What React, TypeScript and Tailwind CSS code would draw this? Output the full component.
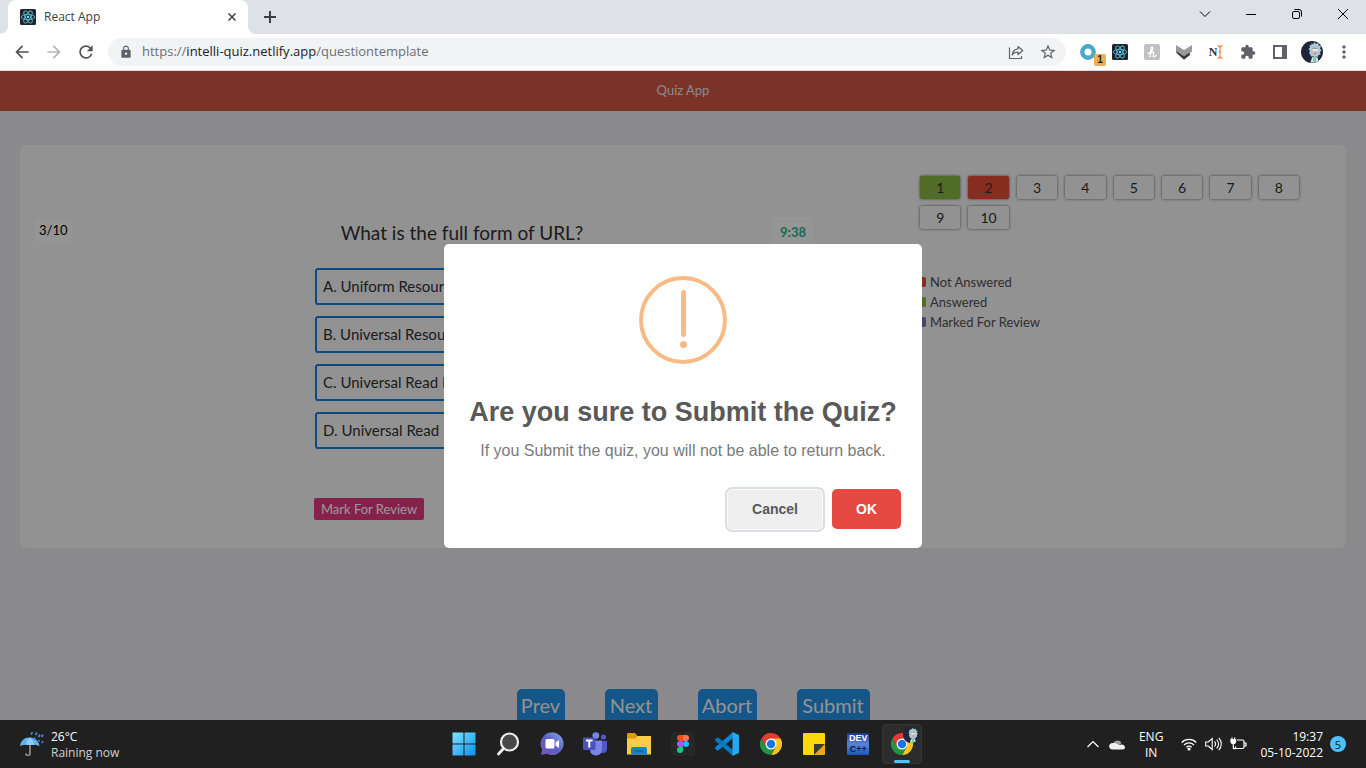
import { useState } from 'react';
import type { ReactNode } from 'react';
import {
  MdArrowBack,
  MdArrowForward,
  MdRefresh,
  MdLock,
  MdStarBorder,
  MdExtension,
  MdMoreVert,
} from 'react-icons/md';

function ReactLogo() {
  return (
    <svg viewBox="0 0 16 16" className="size-4 shrink-0">
      <rect width="16" height="16" rx="1.5" fill="#20232a" />
      <g fill="none" stroke="#57b8d3" strokeWidth="0.9">
        <ellipse cx="8" cy="8" rx="6.8" ry="2.6" />
        <ellipse cx="8" cy="8" rx="6.8" ry="2.6" transform="rotate(60 8 8)" />
        <ellipse cx="8" cy="8" rx="6.8" ry="2.6" transform="rotate(120 8 8)" />
      </g>
      <circle cx="8" cy="8" r="1.3" fill="#61dafb" />
    </svg>
  );
}

function Portrait({ size }: { size: string }) {
  return (
    <svg viewBox="0 0 22 22" className={size}>
      <circle cx="11" cy="11" r="11" fill="#20253a" />
      <path d="m10.500 2 1.500 1.500L13.500 1l1.500 2 2.500-1v2.500l2.500.5-1 2.500 1.500 2-1.500 1.500.5 2.500-2 .5-.5 2-3-1-4 .5-1-2.500L8 12l1-2-1.500-2L9 6.500 8.500 4l2 .200z" fill="#a5ccd9" />
      <ellipse cx="14" cy="9.800" rx="3" ry="5" fill="#cbbfb8" />
      <circle cx="12.800" cy="9" r="1.100" fill="#fff" />
      <circle cx="15.400" cy="9" r="1.100" fill="#fff" />
      <path d="M11.500 7.300h5M12.500 12.500h3" stroke="#6d7d88" strokeWidth="0.700" fill="none" />
      <path d="M9.500 21.500 11 16.500l2.500-1.500 3 1.500 1 3.500q-4 2-8 1.500" fill="#dfe9ec" />
      <path d="m12 16.500 2-1 1.500 1-.5 5h-3z" fill="#6fd0ac" />
    </svg>
  );
}

function ChromeLogo({ size }: { size: string }) {
  return (
    <svg viewBox="0 0 48 48" className={size}>
      <path d="M24 24 3.200 12A24 24 0 0 1 44.800 12z" fill="#e33b2e" />
      <path d="M24 12h20.800A24 24 0 0 1 24 48l10.400-18z" fill="#fcc31e" />
      <path d="M3.200 12 13.600 30 24 36 34.400 30 24 48A24 24 0 0 1 3.200 12z" fill="#229342" />
      <path d="M3.200 12 13.600 30 24 24 24 12z" fill="#e33b2e" />
      <circle cx="24" cy="24" r="12" fill="#fff" />
      <circle cx="24" cy="24" r="9.300" fill="#1a73e8" />
    </svg>
  );
}

function TabStrip() {
  return (
    <div className="flex h-[34px] items-stretch bg-[#dee1e6] pl-2">
      <div className="relative flex w-60 items-center rounded-t-lg bg-white pr-2 pl-3">
        <svg viewBox="0 0 8 8" className="absolute bottom-0 -left-2 size-2" fill="#fff">
          <path d="M8 0v8H0a8 8 0 0 0 8-8" />
        </svg>
        <svg viewBox="0 0 8 8" className="absolute -right-2 bottom-0 size-2" fill="#fff">
          <path d="M0 0v8h8a8 8 0 0 1-8-8" />
        </svg>
        <ReactLogo />
        <span className="flex-1 pl-2 text-[12px] text-[#3c4043]">React App</span>
        <button aria-label="Close tab" className="flex size-4 items-center justify-center">
          <svg viewBox="0 0 8 8" className="size-2" stroke="#3c4043" strokeWidth="1.500">
            <path d="m0.500 0.500 7 7m0-7-7 7" />
          </svg>
        </button>
      </div>
      <button aria-label="New tab" className="flex w-11 items-center justify-center">
        <svg viewBox="0 0 12 12" className="size-3" stroke="#3c4043" strokeWidth="2">
          <path d="M6 0v12M0 6h12" />
        </svg>
      </button>
      <div className="ml-auto flex h-7 text-black">
        <button aria-label="Search tabs" className="flex w-[46px] items-center justify-center">
          <svg viewBox="0 0 12 12" className="size-3" fill="none" stroke="currentColor">
            <path d="m1 3.500 5 5 5-5" />
          </svg>
        </button>
        <button aria-label="Minimize" className="flex w-[46px] items-center justify-center">
          <svg viewBox="0 0 10 10" className="size-[10px]" stroke="currentColor">
            <path d="M0 5.500h10" />
          </svg>
        </button>
        <button aria-label="Restore" className="flex w-[46px] items-center justify-center">
          <svg viewBox="0 0 10 10" className="size-[10px]" fill="none" stroke="currentColor">
            <rect x="0.500" y="2.500" width="7" height="7" rx="1.500" />
            <path d="M2.500.500H7A2.500 2.500 0 0 1 9.500 3v4.500" />
          </svg>
        </button>
        <button aria-label="Close window" className="flex w-[46px] items-center justify-center">
          <svg viewBox="0 0 10 10" className="size-[10px]" stroke="currentColor">
            <path d="m0 0 10 10M10 0 0 10" />
          </svg>
        </button>
      </div>
    </div>
  );
}

function ToolButton({ label, children }: { label: string; children: ReactNode }) {
  return (
    <button aria-label={label} className="flex size-8 shrink-0 items-center justify-center text-[#5f6368]">
      {children}
    </button>
  );
}

function Toolbar() {
  return (
    <div className="flex h-[37px] items-center border-b border-[#dadce0] bg-white pr-1.5 pl-1.5">
      <ToolButton label="Back"><MdArrowBack className="size-5 text-[#4f5357]" /></ToolButton>
      <ToolButton label="Forward"><MdArrowForward className="size-5 text-[#b4b6b8]" /></ToolButton>
      <ToolButton label="Reload"><MdRefresh className="size-5 text-[#4f5357]" /></ToolButton>
      <div className="ml-1.5 flex h-7 flex-1 items-center rounded-full bg-[#f1f3f4] pl-[11px]">
        <MdLock className="size-3.5 text-[#5f6368]" />
        <div role="textbox" aria-label="Address" className="flex-1 pl-[9px] text-[13px] text-[#6b6f74]">
          https://<span className="text-[#202124]">intelli-quiz.netlify.app</span>/questiontemplate
        </div>
        <ToolButton label="Share">
          <svg viewBox="0 0 16 16" className="size-4" fill="none" stroke="currentColor" strokeWidth="1.200">
            <path d="M1.500 3.500v11h12v-2.500" />
            <path d="M10 2.500 14.700 6.500 10 10.500V8.200C7 8.200 5.300 9 4.200 11 4.500 7.500 6.500 5.200 10 4.800z" strokeLinejoin="round" />
          </svg>
        </ToolButton>
        <ToolButton label="Bookmark this tab"><MdStarBorder className="size-[18px]" /></ToolButton>
        <span className="w-0.5" />
      </div>
      <div className="ml-1.5 flex items-center">
        <ToolButton label="Quick find, 1 notification">
          <span className="relative flex size-5 items-center justify-center">
            <svg viewBox="0 0 16 16" className="size-4">
              <circle cx="8" cy="8" r="5.700" fill="none" stroke="#46a9ca" strokeWidth="4.400" />
            </svg>
            <span className="absolute -right-2 -bottom-1 flex size-3 items-center justify-center rounded-xs bg-[#f0ad4e] font-['Liberation_Sans',sans-serif] text-[10px] leading-none font-bold text-[#222]">1</span>
          </span>
        </ToolButton>
        <ToolButton label="React tools"><ReactLogo /></ToolButton>
        <ToolButton label="Honey">
          <svg viewBox="0 0 16 16" className="size-4">
            <rect width="16" height="16" rx="2" fill="#c1c1c1" />
            <path d="M4 9.500C7 8 9 5.500 8.700 3.800 8.300 2.500 7 3 6.800 5L6 13M6.300 10.500C7 8.500 9.300 7.300 9.700 8.500S8.500 12 9.300 12.700 11.500 12 12 11.300" fill="none" stroke="#fff" strokeWidth="1.300" strokeLinecap="round" />
          </svg>
        </ToolButton>
        <ToolButton label="Layers">
          <svg viewBox="0 0 16 16" className="size-4">
            <path d="M0 1 8 6l8-5v6.500l-8 5-8-5z" fill="#9b9b9b" />
            <path d="M0 7 8 12.200 13.500 8.500 14 11l-6 4.800L.5 9z" fill="#3b3b3b" />
          </svg>
        </ToolButton>
        <ToolButton label="Name input">
          <span className="flex items-center font-['Liberation_Serif',serif] text-[12px] leading-none font-bold text-[#333]">
            N
            <svg viewBox="0 0 6 14" className="h-3.5 w-1.5" fill="none" stroke="#ee8547" strokeWidth="1.200">
              <path d="M.5.700Q3 .7 3 3v8q0 2.300-2.500 2.300M5.500.700Q3 .7 3 3m2.500 10.300Q3 13.300 3 11M1.500 7h3" />
            </svg>
          </span>
        </ToolButton>
        <ToolButton label="Extensions"><MdExtension className="size-4" /></ToolButton>
        <ToolButton label="Side panel">
          <svg viewBox="0 0 14 14" className="size-3.5">
            <path fillRule="evenodd" d="M0 0h14v14H0zM2 2v10h7V2z" fill="#5f6368" />
          </svg>
        </ToolButton>
        <ToolButton label="Profile"><Portrait size="size-[22px]" /></ToolButton>
        <ToolButton label="Menu"><MdMoreVert className="size-5" /></ToolButton>
      </div>
    </div>
  );
}

const OPTIONS = [
  'A. Uniform Resource Locator',
  'B. Universal Resource Locator',
  'C. Universal Read Locator',
  'D. Universal Read Link',
];

const LEGEND = [
  { label: 'Not Answered', swatch: 'bg-[#e24c35]' },
  { label: 'Answered', swatch: 'bg-[#85b440]' },
  { label: 'Marked For Review', swatch: 'bg-[#7a73a8]' },
];

const ACTIONS = [
  { label: 'Prev', width: 'w-12' },
  { label: 'Next', width: 'w-[53px]' },
  { label: 'Abort', width: 'w-[59px]' },
  { label: 'Submit', width: 'w-[73px]' },
];

function numberTone(n: number) {
  if (n === 1) return 'bg-[#85b440]';
  if (n === 2) return 'bg-[#e24c35]';
  return 'bg-[#f3f3f3]';
}

function QuizCard() {
  return (
    <section className="mx-5 mt-[34px] grid min-h-[403px] grid-cols-[294px_1fr_430px] rounded-md bg-[#f3f3f3] text-[#303030]">
      <div className="pt-[72px] pl-[15px]">
        <span className="inline-flex h-6 items-center rounded-sm bg-white/50 px-1 text-[13px] text-black">3/10</span>
      </div>
      <div className="flex items-start justify-between pt-[72px] pr-[102px]">
        <div className="w-[296px]">
          <h2 className="h-[51px] text-center text-[19px] leading-8 whitespace-nowrap">What is the full form of URL?</h2>
          <div className="flex flex-col gap-[11px] pl-px">
            {OPTIONS.map((option) => (
              <button key={option} className="h-[37px] rounded-[3px] border-2 border-[#177ad8] px-1.5 text-left text-[15px]">
                {option}
              </button>
            ))}
          </div>
          <button className="mt-[49px] h-[22px] w-[110px] rounded-xs bg-[#e0387b] text-[13px] leading-[22px] whitespace-nowrap text-white">
            Mark For Review
          </button>
        </div>
        <span className="flex h-8 w-[42px] items-center justify-center rounded-md bg-white/50 text-[13px] font-bold text-[#27b48a]">
          9:38
        </span>
      </div>
      <div className="pt-[31px] pl-1">
        <div className="grid w-[379px] grid-cols-8 gap-x-2 gap-y-[7px] text-[14px]">
          {Array.from({ length: 10 }, (_, i) => i + 1).map((n) => (
            <button key={n} className={`h-[23px] rounded-xs leading-[22px] shadow-[0_0_3px_0_rgba(0,0,0,0.6)] ${numberTone(n)}`}>
              {n}
            </button>
          ))}
        </div>
        <ul className="mt-[43px] text-[13px] leading-5 text-[#505050]">
          {LEGEND.map((item) => (
            <li key={item.label} className="flex items-center gap-1">
              <span className={`-ml-1 h-[10px] w-[10px] rounded-xs ${item.swatch}`} />
              {item.label}
            </li>
          ))}
        </ul>
      </div>
    </section>
  );
}

function ConfirmDialog({ onClose }: { onClose: () => void }) {
  return (
    <div className="absolute inset-0 flex items-center justify-center bg-black/40">
      <div
        role="dialog"
        aria-modal="true"
        aria-labelledby="confirm-title"
        className="flex w-[478px] flex-col items-center rounded-[5px] bg-white pt-8 font-['Liberation_Sans',Arial,sans-serif]"
      >
        <svg viewBox="0 0 88 88" className="size-[88px]">
          <circle cx="44" cy="44" r="42" fill="none" stroke="#f8bb86" strokeWidth="4" />
          <rect x="42" y="14" width="5" height="47" rx="2.500" fill="#f8bb86" />
          <circle cx="44.500" cy="68.500" r="3.500" fill="#f8bb86" />
        </svg>
        <h1 id="confirm-title" className="mt-8 text-[27px] leading-8 font-bold whitespace-nowrap text-[#595959]">
          Are you sure to Submit the Quiz?
        </h1>
        <p className="mt-3 text-[16px] leading-[22px] text-[#7a7a7a]">
          If you Submit the quiz, you will not be able to return back.
        </p>
        <div className="flex w-full items-center justify-end gap-[7px] pt-[25px] pr-[21px] pb-4 text-[14px] font-bold">
          <button
            onClick={onClose}
            className="h-[45px] w-[100px] rounded-[7px] border-2 border-[#d9dfe5] bg-[#efefef] text-[#595959] shadow-[inset_0_0_0_1px_#f8fafb]"
          >
            Cancel
          </button>
          <button onClick={onClose} className="h-10 w-[69px] rounded-[5px] bg-[#e64942] text-white">
            OK
          </button>
        </div>
      </div>
    </div>
  );
}

function TaskItem({ label, children }: { label: string; children: ReactNode }) {
  return (
    <button aria-label={label} className="relative flex h-12 w-11 items-center justify-center">
      {children}
    </button>
  );
}

function Taskbar() {
  return (
    <footer className="grid h-12 shrink-0 grid-cols-[1fr_482px_1fr] items-center bg-[#202020] text-[12px] leading-4 text-white">
      <button className="flex items-center gap-[7px] pl-5 text-left">
        <svg viewBox="0 0 24 24" className="size-6">
          <path d="M0 14C1 8 5 5 10 5.500S19 9 19.500 14q-5-2-9.500-1-5-1-10 1" fill="#60b2f2" />
          <path d="M10 5.500C7 8 6 10.500 6 13q2-.7 4 0l4 0c0-3-1.500-5.500-4-7.500" fill="#8ccbf8" />
          <path d="M10 13v8.500q0 2-2 2t-2-2" fill="none" stroke="#85878b" strokeWidth="1.800" />
          <path d="m12.500 0-1.500 2.500m6-2-1.500 2.500m-.5 2.500-1 2m6-5-1.500 2.500m4.500-2.500-1.500 2.500m-2 3-1 1.500m4.500-.5-1 2" stroke="#3f8ed8" strokeWidth="1.600" />
        </svg>
        <span className="pt-px">
          26°C
          <br />
          <span className="text-[#d0d0d0]">Raining now</span>
        </span>
      </button>
      <nav className="flex">
        <TaskItem label="Start">
          <svg viewBox="0 0 24 24" className="size-6">
            <defs>
              <linearGradient id="win" x1="0" y1="0" x2="1" y2="1" gradientUnits="objectBoundingBox">
                <stop stopColor="#7ae7ff" />
                <stop offset="1" stopColor="#0c8fee" />
              </linearGradient>
            </defs>
            <path d="M.5.500h11v11H.500zM12.500.500h11v11h-11zM.5 12.500h11v11H.500zM12.500 12.500h11v11h-11z" fill="url(#win)" />
          </svg>
        </TaskItem>
        <TaskItem label="Search">
          <svg viewBox="0 0 24 24" className="size-6" fill="none" stroke="#eee" strokeLinecap="round">
            <circle cx="13.500" cy="10" r="8.500" fill="#48494a" strokeWidth="2.200" />
            <path d="M7.500 16.500 2.500 22" strokeWidth="2.800" />
          </svg>
        </TaskItem>
        <TaskItem label="Chat">
          <svg viewBox="0 0 24 24" className="size-6">
            <defs>
              <linearGradient id="chat" x1="0" y1="1" x2="1" y2="0">
                <stop stopColor="#7a55b8" />
                <stop offset="0.500" stopColor="#5c5fc5" />
                <stop offset="1" stopColor="#8cacee" />
              </linearGradient>
            </defs>
            <path d="M12.500.500a11.300 11.300 0 1 1-5.500 21.300L1 23l1.200-5.500A11.300 11.300 0 0 1 12.500.500" fill="url(#chat)" />
            <rect x="5.500" y="7" width="9" height="9.500" rx="1.500" fill="#fff" />
            <path d="M15.500 10.500 19 8v8l-3.500-2.500z" fill="#fff" />
          </svg>
        </TaskItem>
        <TaskItem label="Teams">
          <svg viewBox="0 0 24 24" className="size-6">
            <circle cx="20.500" cy="5" r="2.600" fill="#5059c9" />
            <path d="M17 9h7v8q0 4-4 4-3 0-4-3z" fill="#5059c9" />
            <circle cx="12.800" cy="3.600" r="3.400" fill="#7b83eb" />
            <path d="M7 8.500h12V17q0 6-6 6.500-6-.5-6-6.500z" fill="#7b83eb" />
            <rect y="5.500" width="12.500" height="12.500" rx="1" fill="#4b53bc" />
            <path d="M3 8.500h6.500M6.250 8.500v7" stroke="#fff" strokeWidth="2" />
          </svg>
        </TaskItem>
        <TaskItem label="File Explorer">
          <svg viewBox="0 0 24 24" className="size-6">
            <path d="M0 2q0-1 1-1h7l2.500 3v5H0z" fill="#dc9a0a" />
            <path d="M0 6.500h8L10.500 4H24v18.500H0z" fill="#fdcb4a" />
            <path d="M4 22.500V17q0-2 2-2h12q2 0 2 2v5.500z" fill="#1482d0" />
            <path d="M8 19h8" stroke="#075c9c" strokeWidth="1.200" />
          </svg>
        </TaskItem>
        <TaskItem label="Figma">
          <svg viewBox="0 0 24 24" className="size-6">
            <rect width="24" height="24" rx="3" fill="#272727" />
            <path d="M12 3H9a3 3 0 0 0 0 6h3z" fill="#f24e1e" />
            <path d="M12 3h3a3 3 0 0 1 0 6h-3z" fill="#ff7262" />
            <path d="M12 9H9a3 3 0 0 0 0 6h3z" fill="#a259ff" />
            <circle cx="15" cy="12" r="3" fill="#1abcfe" />
            <path d="M12 15H9a3 3 0 1 0 3 3z" fill="#0acf83" />
          </svg>
        </TaskItem>
        <TaskItem label="Visual Studio Code">
          <svg viewBox="0 0 24 24" className="size-6">
            <path d="M18 0v6L3.500 18.200Q2.500 19 1.500 18L.5 17q-1-1 0-2z" fill="#0b84d2" />
            <path d="M18 24v-6L3.500 5.800Q2.500 5 1.500 6L.5 7q-1 1 0 2z" fill="#0876bd" />
            <path d="M17.500 0 24 3v18l-6.500 3z" fill="#2aa7ee" />
          </svg>
        </TaskItem>
        <TaskItem label="Chrome"><ChromeLogo size="size-[22px]" /></TaskItem>
        <TaskItem label="Sticky Notes">
          <svg viewBox="0 0 22 22" className="size-[22px]">
            <path d="M0 1q0-1 1-1h20q1 0 1 1v10L11 22H1q-1 0-1-1z" fill="#fdd70b" />
            <path d="M11 22V11h11z" fill="#3a3933" />
            <path d="M22 11v10q0 1-1 1H11z" fill="#e9a917" />
          </svg>
        </TaskItem>
        <TaskItem label="Dev C++">
          <span className="flex size-[22px] flex-col items-center overflow-hidden bg-linear-to-b from-[#17378f] via-[#5d83d8] to-[#1957b8] font-['Liberation_Sans',sans-serif] text-[9px] leading-[11px] font-bold">
            <span className="h-[11px]">DEV</span>
            <span className="h-[11px] text-[#06205c]">C++</span>
          </span>
        </TaskItem>
        <TaskItem label="Chrome, current window">
          <span className="relative flex size-10 items-center justify-center rounded-sm border border-[#363636] bg-[#2c2c2c]">
            <ChromeLogo size="size-[22px]" />
            <span className="absolute top-0.5 right-0.5"><Portrait size="size-4" /></span>
            <span className="absolute bottom-0 h-[3px] w-4 rounded-full bg-[#4cc2ff]" />
          </span>
        </TaskItem>
      </nav>
      <div className="flex items-center justify-end pr-5">
        <button aria-label="Show hidden icons" className="mr-2.5">
          <svg viewBox="0 0 12 12" className="size-3" fill="none" stroke="#fff" strokeWidth="1.200">
            <path d="m.5 9 5.500-5.500L11.500 9" />
          </svg>
        </button>
        <svg viewBox="0 0 16 12" className="h-3 w-4">
          <path d="M4 7a4.500 4.500 0 0 1 8.500-2L8 9z" fill="#a0a0a0" />
          <path d="M3.500 11.500a3.300 3.300 0 1 1 1.500-6.200q1-.5 2 .2l3 1.500q5-1.500 6 2 0 2.500-2.500 2.500z" fill="#f0f0f0" />
        </svg>
        <button className="mx-3.5 pt-px text-center">ENG<br />IN</button>
        <button aria-label="Network, sound and battery" className="mx-1 flex items-center gap-2">
          <svg viewBox="0 0 16 14" className="h-3.5 w-4" fill="none" stroke="#fff" strokeWidth="1.200">
            <path d="M.7 5.500a10.300 10.300 0 0 1 14.600 0M3 8a7 7 0 0 1 10 0M5.300 10.300a3.800 3.800 0 0 1 5.400 0" />
            <circle cx="8" cy="12" r="1" fill="#fff" />
          </svg>
          <svg viewBox="0 0 17 14" className="h-3.5 w-[17px]" fill="none" stroke="#fff" strokeWidth="1.100">
            <path d="M.7 5h2.500l4-3.500v11L3.200 9H.700zM9.500 4.500a3.500 3.500 0 0 1 0 5M11.700 2.700a6 6 0 0 1 0 8.600M13.800.800a9 9 0 0 1 0 12.400" />
          </svg>
          <svg viewBox="0 0 17 14" className="h-3.5 w-[17px]" fill="none" stroke="#fff" strokeWidth="1.200">
            <path d="M7 3h5.500q1.500 0 1.500 1.500v5.500q0 1.500-1.500 1.500H5.500V9.500M14.500 6H16v3h-1.500M3.300 7v4q0 .7.700.7h1.500" />
            <path d="M1 2.500h4.600v2.500L4.500 6.500H2L1 5zM2 .5v2m2.600-2v2" fill="#fff" />
          </svg>
        </button>
        <button className="ml-[9px] pt-px text-right">19:37<br />05-10-2022</button>
        <span className="ml-[7px] flex size-4 items-center justify-center rounded-full bg-[#4cc2ff] text-[11px] leading-none text-[#111]">5</span>
      </div>
    </footer>
  );
}

export default function App() {
  const [open, setOpen] = useState(true);
  return (
    <div className="flex h-screen flex-col overflow-hidden font-['Open_Sans','Noto_Sans',sans-serif]">
      <header className="shrink-0">
        <TabStrip />
        <Toolbar />
      </header>
      <main className="relative min-h-0 flex-1 overflow-hidden bg-[#e6e7eb] font-[Lato,sans-serif]">
        <div className="flex h-10 items-center justify-center bg-[#cb5540] text-[13px] text-[#e6e6e6]">Quiz App</div>
        <QuizCard />
        <div className="mt-[141px] flex justify-center gap-10 pl-5">
          {ACTIONS.map((action) => (
            <button
              key={action.label}
              onClick={() => setOpen(true)}
              className={`h-8 rounded-t-[5px] bg-[#248fe5] pb-px text-[20px] leading-7 text-[#f3f3f3] ${action.width}`}
            >
              {action.label}
            </button>
          ))}
        </div>
        {open && <ConfirmDialog onClose={() => setOpen(false)} />}
      </main>
      <Taskbar />
    </div>
  );
}
